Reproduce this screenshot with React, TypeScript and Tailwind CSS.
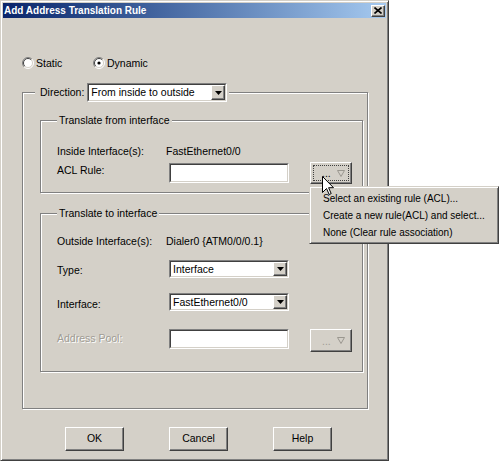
import React from 'react';

// classic 3D edges
const RAISED =
  'border border-t-white border-l-white border-r-[#404040] border-b-[#404040] shadow-[inset_-1px_-1px_0_#808080] bg-[#d4d0c8]';
const ETCHED =
  'border border-[#808080] shadow-[1px_1px_0_#fff,inset_1px_1px_0_#fff]';

const Radio: React.FC<{ checked?: boolean; label: string; className?: string }> = ({ checked, label, className }) => (
  <div className={`flex items-center gap-[2px] ${className ?? ''}`}>
    <svg width="12" height="12" viewBox="0 0 12 12">
      <circle cx="6" cy="6" r="5" fill="#fff" />
      <path d="M2.1 9.9A5.5 5.5 0 0 1 9.9 2.1" fill="none" stroke="#808080" />
      <path d="M2.8 9.2A4.5 4.5 0 0 1 9.2 2.8" fill="none" stroke="#404040" />
      <path d="M9.9 2.1A5.5 5.5 0 0 1 2.1 9.9" fill="none" stroke="#fff" />
      <path d="M9.2 2.8A4.5 4.5 0 0 1 2.8 9.2" fill="none" stroke="#d4d0c8" />
      {checked && <circle cx="6" cy="6" r="1.6" fill="#000" />}
    </svg>
    <span className="leading-[14px]">{label}</span>
  </div>
);

const Sunken: React.FC<{ className?: string; children?: React.ReactNode }> = ({ className, children }) => (
  <div className={`border border-t-[#808080] border-l-[#808080] border-r-white border-b-white ${className ?? ''}`}>
    <div className="h-full w-full border border-t-[#404040] border-l-[#404040] border-r-[#d4d0c8] border-b-[#d4d0c8] bg-white flex items-center">
      {children}
    </div>
  </div>
);

const Select: React.FC<{ value: string; className?: string }> = ({ value, className }) => (
  <Sunken className={className}>
    <span className="flex-1 pl-[2px] leading-[13px] whitespace-nowrap">{value}</span>
    <div className={`h-full w-[14px] flex items-center justify-center ${RAISED}`}>
      <svg width="7" height="4" viewBox="0 0 7 4">
        <polygon points="0,0 7,0 3.5,4" fill="#000" />
      </svg>
    </div>
  </Sunken>
);

const DotsButton: React.FC<{ focused?: boolean; disabled?: boolean; className?: string }> = ({ focused, disabled, className }) => (
  <div className={`w-[42px] p-[2px] ${RAISED} ${className ?? ''}`}>
    <div
      className={`h-full w-full flex items-center justify-between pl-[8px] pr-[3px] border ${
        focused ? 'border-dotted border-[#404040]' : 'border-transparent'
      }`}
    >
      <span className={`leading-[10px] ${disabled ? 'text-[#a09c94]' : 'text-black'}`}>...</span>
      <svg width="8" height="7" viewBox="0 0 8 7">
        <polygon points="0.5,0.5 7.5,0.5 4,6.5" fill="none" stroke="#9a978f" />
      </svg>
    </div>
  </div>
);

const PushButton: React.FC<{ label: string }> = ({ label }) => (
  <div className={`w-[59px] h-[24px] flex items-center justify-center ${RAISED}`}>{label}</div>
);

const Label: React.FC<{ children: React.ReactNode; className?: string }> = ({ children, className }) => (
  <span className={`w-[109px] shrink-0 leading-[14px] ${className ?? ''}`}>{children}</span>
);

export default function App() {
  return (
    <div className="relative w-[500px] h-[463px] bg-white font-['Liberation_Sans',Arial,sans-serif] text-[10.5px] text-black select-none">
      <div className="w-[389px] h-[461px] bg-[#d4d0c8] border border-t-[#d4d0c8] border-l-[#d4d0c8] border-r-[#404040] border-b-[#404040] shadow-[inset_1px_1px_0_#fff,inset_-1px_-1px_0_#808080] p-[2px] flex flex-col">
        {/* title bar */}
        <div className="h-[15px] bg-linear-to-r from-[#0a246a] to-[#a6caf0] flex items-center justify-between pl-[1px] pr-[1px]">
          <span className="text-white font-bold text-[10px] leading-[12px]">Add Address Translation Rule</span>
          <div className={`w-[14px] h-[12px] flex items-center justify-center ${RAISED}`}>
            <svg width="8" height="7" viewBox="0 0 8 7">
              <path d="M0.5 0.5L7.5 6.5M7.5 0.5L0.5 6.5" stroke="#000" strokeWidth="1.6" />
            </svg>
          </div>
        </div>

        <div className="pl-[19px] flex flex-col">
          {/* static / dynamic */}
          <div className="mt-[38px] flex items-center">
            <Radio label="Static" className="w-[71px]" />
            <Radio label="Dynamic" checked />
          </div>

          {/* direction group */}
          <fieldset className={`mt-[13px] w-[346px] pl-[17px] pb-[36px] ${ETCHED}`}>
            <legend className="ml-[-5px] pl-[5px] pr-[2px] bg-[#d4d0c8]">
              <div className="flex items-center gap-[3px]">
                <span>Direction:</span>
                <Select value="From inside to outside" className="w-[140px] h-[19px]" />
              </div>
            </legend>

            {/* translate from */}
            <fieldset className={`mt-[12px] w-[323px] pl-[16px] pb-[8px] ${ETCHED}`}>
              <legend className="px-[2px] leading-[13px] bg-[#d4d0c8]">Translate from interface</legend>
              <div className="mt-[17px] flex">
                <Label>Inside Interface(s):</Label>
                <span className="leading-[14px]">FastEthernet0/0</span>
              </div>
              <div className="mt-[4px] flex items-start">
                <Label className="mt-[1px]">ACL Rule:</Label>
                <Sunken className="ml-[3px] mt-[1px] w-[120px] h-[20px]" />
                <DotsButton focused className="ml-[21px] h-[22px]" />
              </div>
            </fieldset>

            {/* translate to */}
            <fieldset className={`mt-[14px] w-[323px] pl-[16px] pb-[19px] ${ETCHED}`}>
              <legend className="px-[2px] leading-[13px] bg-[#d4d0c8]">Translate to interface</legend>
              <div className="mt-[14px] flex">
                <Label>Outside Interface(s):</Label>
                <span className="leading-[14px]">Dialer0 {'{'}ATM0/0/0.1{'}'}</span>
              </div>
              <div className="mt-[12px] flex items-start">
                <Label className="mt-[3px]">Type:</Label>
                <Select value="Interface" className="ml-[3px] w-[120px] h-[18px]" />
              </div>
              <div className="mt-[15px] flex items-start">
                <Label className="mt-[4px]">Interface:</Label>
                <Select value="FastEthernet0/0" className="ml-[3px] w-[120px] h-[18px]" />
              </div>
              <div className="mt-[18px] flex items-start">
                <Label className="mt-[2px] text-[#a09c94] [text-shadow:1px_1px_0_#fff]">Address Pool:</Label>
                <Sunken className="ml-[3px] w-[120px] h-[20px]" />
                <DotsButton disabled className="ml-[21px] h-[23px]" />
              </div>
            </fieldset>
          </fieldset>

          {/* buttons */}
          <div className="mt-[18px] ml-[43px] flex gap-[45px]">
            <PushButton label="OK" />
            <PushButton label="Cancel" />
            <PushButton label="Help" />
          </div>
        </div>
      </div>

      {/* popup menu */}
      <div className="absolute left-[309px] top-[186px] w-[190px] h-[58px] bg-[#d4d0c8] border border-t-[#d4d0c8] border-l-[#d4d0c8] border-r-[#404040] border-b-[#404040] shadow-[inset_1px_1px_0_#fff,inset_-1px_-1px_0_#808080] pt-[3px] pl-[13px] flex flex-col text-[10px]">
        <span className="leading-[17px] whitespace-nowrap">Select an existing rule (ACL)...</span>
        <span className="leading-[17px] whitespace-nowrap">Create a new rule(ACL) and select...</span>
        <span className="leading-[17px] whitespace-nowrap">None (Clear rule association)</span>
      </div>

      {/* mouse cursor */}
      <svg className="absolute left-[322px] top-[176px]" width="12" height="20" viewBox="0 0 12 20">
        <path d="M0.5 0.5L0.5 16.5L4.5 12.5L7.2 18.5L9.2 17.6L6.6 11.7L11.5 11.7Z" fill="#fff" stroke="#000" strokeLinejoin="miter" />
      </svg>
    </div>
  );
}
